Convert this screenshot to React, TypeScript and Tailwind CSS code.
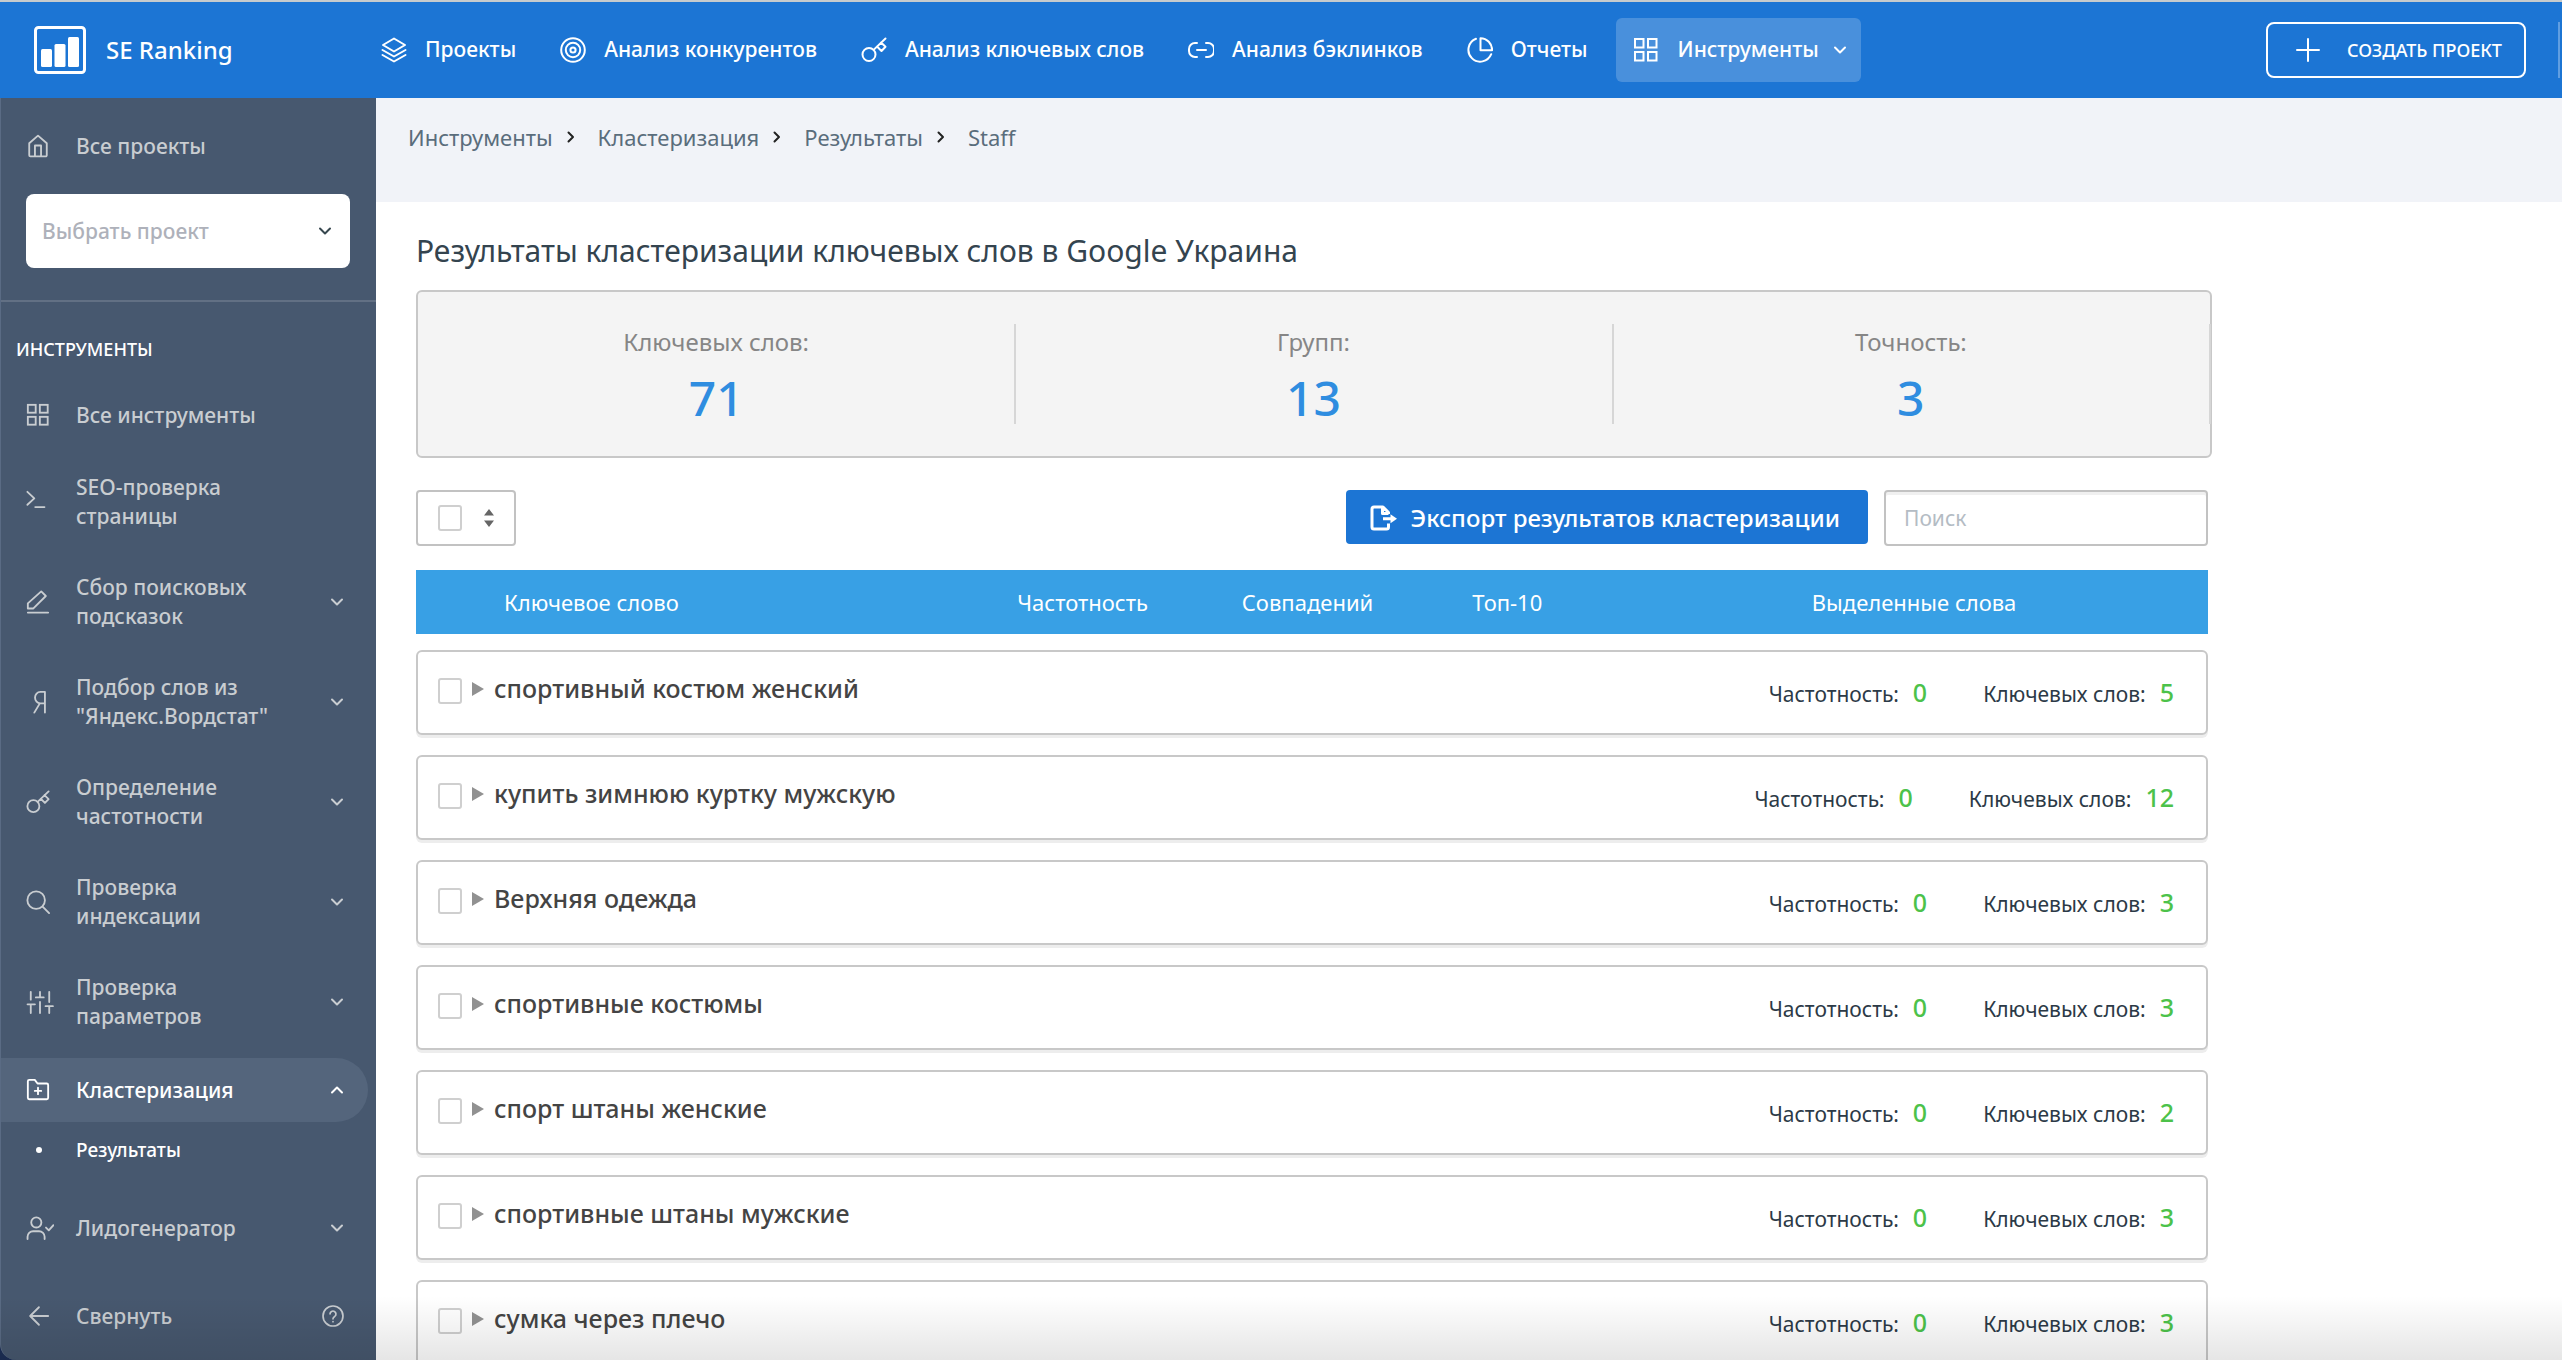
import { useState, type ReactNode } from "react";

type IconProps = { className?: string; children: ReactNode; box?: string };

function Icon({ className = "size-[26px]", box = "0 0 26 26", children }: IconProps) {
  return (
    <svg
      aria-hidden
      viewBox={box}
      fill="none"
      stroke="currentColor"
      strokeWidth="2"
      strokeLinecap="round"
      strokeLinejoin="round"
      className={"shrink-0 " + className}
    >
      {children}
    </svg>
  );
}

const layers = (
  <>
    <path d="M13 1.5 24 8 13 14.5 2 8Z" />
    <path d="m1.5 13 11.5 6.5L24.5 13" />
    <path d="m1.5 18 11.5 6.5L24.5 18" />
  </>
);
const target = (
  <>
    <circle cx="13" cy="13" r="11.8" />
    <circle cx="13" cy="13" r="7.2" />
    <circle cx="13" cy="13" r="2.6" />
  </>
);
const keyShape = (
  <>
    <circle cx="8" cy="17.5" r="6.5" />
    <path d="M12.6 12.9 24.5 1.5M16 9.5l4.5 4.5 4-4.2-4.5-4.3" />
  </>
);
const link = (
  <>
    <path d="M9 6H7a6 6 0 0 0-6 6v2a6 6 0 0 0 6 6h2" />
    <path d="M18 6h2a6 6 0 0 1 6 6v2a6 6 0 0 1-6 6h-2" />
    <path d="M9 13h9" />
  </>
);
const pie = (
  <>
    <path d="M9 1.8a11.8 11.8 0 1 0 15.2 15.4" />
    <path d="M13.5 1.2v12h11.6a11.8 11.8 0 0 0-11.6-12Z" />
  </>
);
const grid = (
  <g strokeLinejoin="miter">
    <rect x="2" y="2" width="8.5" height="8.5" />
    <rect x="15" y="2" width="8.5" height="8.5" />
    <rect x="2" y="15" width="8.5" height="8.5" />
    <rect x="15" y="15" width="8.5" height="8.5" />
  </g>
);
const home = (
  <>
    <path d="M3.5 10 13 1.8 22.5 10v13a1.2 1.2 0 0 1-1.2 1.2H4.7a1.2 1.2 0 0 1-1.2-1.2Z" />
    <path d="M9.7 24V12.5h6.6V24" />
  </>
);
const terminal = <path d="m1.5 2 7.5 7-7.5 7M10 18.5h10" />;
const pencil = (
  <>
    <path d="M16.5 1.5 21.5 6.5 8 20H2v-5.5Z" />
    <path d="M2 24.5h22" />
  </>
);
const yandex = <path d="M20.5 24.5V2h-5a5.5 6 0 0 0 0 12.5h5M15 14.5 9 24.5" />;
const search = (
  <>
    <circle cx="11" cy="11" r="9.5" />
    <path d="m18 18 7 7" />
  </>
);
const sliders = (
  <path d="M5 2v8.5M1.5 15.5h8M5 15.5V25M15 2v5M10.5 8H19M15 13v12M25 2v11M21 17.5h8M25 17.5V25" />
);
const folder = (
  <>
    <path d="M2 21.5v-18A1.5 1.5 0 0 1 3.5 2h6l3 4h10A1.5 1.5 0 0 1 24 7.5v14a1.5 1.5 0 0 1-1.5 1.5h-19A1.5 1.5 0 0 1 2 21.5Z" />
    <path d="M13 10.5v7M9.5 14h7" />
  </>
);
const userCheck = (
  <>
    <circle cx="11" cy="7" r="5.5" />
    <path d="M1.5 25v-2.5a6 6 0 0 1 6-6H14a6 6 0 0 1 6 6V25M21.5 12.5l3 3 5-5.5" />
  </>
);
const arrowLeft = <path d="M24 13H5M14 3.5 4.5 13l9.5 9.5" />;
const help = (
  <>
    <circle cx="13" cy="13" r="11.8" />
    <path d="M9.5 10.5a3.5 3.5 0 1 1 5.5 3c-1.4.9-2 1.4-2 2.8M13 19.6v.2" />
  </>
);

function Chevron({ className = "size-3.5", up = false }: { className?: string; up?: boolean }) {
  return (
    <Icon box="0 0 14 14" className={className}>
      <path d={up ? "m2 9.5 5-5 5 5" : "m2 4.5 5 5 5-5"} />
    </Icon>
  );
}

const NAV = [
  { label: "Проекты", icon: layers },
  { label: "Анализ конкурентов", icon: target },
  { label: "Анализ ключевых слов", icon: keyShape },
  { label: "Анализ бэклинков", icon: link },
  { label: "Отчеты", icon: pie },
];

const TOOLS = [
  { label: "SEO-проверка страницы", icon: terminal, nested: false },
  { label: "Сбор поисковых подсказок", icon: pencil, nested: true },
  { label: 'Подбор слов из "Яндекс.Вордстат"', icon: yandex, nested: true },
  { label: "Определение частотности", icon: keyShape, nested: true },
  { label: "Проверка индексации", icon: search, nested: true },
  { label: "Проверка параметров", icon: sliders, nested: true },
];

const CRUMBS = ["Инструменты", "Кластеризация", "Результаты", "Staff"];

const STATS = [
  { label: "Ключевых слов:", value: 71 },
  { label: "Групп:", value: 13 },
  { label: "Точность:", value: 3 },
];

const CLUSTERS = [
  { name: "спортивный костюм женский", frequency: 0, count: 5 },
  { name: "купить зимнюю куртку мужскую", frequency: 0, count: 12 },
  { name: "Верхняя одежда", frequency: 0, count: 3 },
  { name: "спортивные костюмы", frequency: 0, count: 3 },
  { name: "спорт штаны женские", frequency: 0, count: 2 },
  { name: "спортивные штаны мужские", frequency: 0, count: 3 },
  { name: "сумка через плечо", frequency: 0, count: 3 },
];

const CHECKBOX =
  "block h-[26px] w-6 shrink-0 appearance-none rounded-[3px] border-2 border-[#cfcfcf] bg-white/60 checked:bg-[#38a0e5]";

function Header() {
  return (
    <header className="flex h-[98px] shrink-0 items-center border-t-2 border-[#c6cbcd] bg-[#1c75d4] text-[21px] font-medium text-white">
      <a href="#" className="flex w-[381px] shrink-0 items-center gap-5 pl-[34px] text-2xl">
        <svg aria-hidden viewBox="0 0 52 48" className="h-12 w-[52px]">
          <rect x="1.5" y="1.5" width="49" height="45" rx="3" fill="none" stroke="#fff" strokeWidth="3" />
          <rect x="7" y="23" width="11" height="18" rx="1.5" fill="#fff" />
          <rect x="20.5" y="18" width="11" height="23" rx="1.5" fill="#fff" />
          <rect x="34" y="11" width="11" height="30" rx="1.5" fill="#fff" />
        </svg>
        SE Ranking
      </a>
      <nav className="flex grow items-center gap-11 whitespace-nowrap">
        {NAV.map((item) => (
          <a key={item.label} href="#" className="flex items-center gap-[18px]">
            <Icon>{item.icon}</Icon>
            {item.label}
          </a>
        ))}
        <button
          type="button"
          className="-ml-4 flex h-16 items-center rounded-md bg-white/20 pr-3.5 pl-[17px]"
        >
          <Icon>{grid}</Icon>
          <span className="mr-3.5 ml-[19px]">Инструменты</span>
          <Chevron />
        </button>
      </nav>
      <button
        type="button"
        className="flex h-14 shrink-0 items-center gap-[27px] rounded-lg border-2 border-white pr-[22px] pl-7 text-[18px]"
      >
        <Icon className="size-6" box="0 0 24 24">
          <path d="M12 1v22M1 12h22" />
        </Icon>
        СОЗДАТЬ ПРОЕКТ
      </button>
      <div className="mr-0.5 ml-8 h-14 w-0.5 bg-white/30" />
    </header>
  );
}

function Sidebar() {
  return (
    <aside className="flex w-[376px] shrink-0 flex-col overflow-hidden rounded-bl-2xl border-l border-[#5a6b84] bg-[#47586f] text-[21px] leading-[29px] font-medium text-[#c9cdd1]">
      <a href="#" className="flex h-24 shrink-0 items-center pl-[25px]">
        <Icon className="size-6">{home}</Icon>
        <span className="ml-[26px]">Все проекты</span>
      </a>
      <div className="relative mr-[26px] ml-[25px]">
        <select
          aria-label="Проект"
          defaultValue=""
          className="h-[74px] w-full appearance-none rounded-lg bg-white px-4 text-[#aeb1ba]"
        >
          <option value="">Выбрать проект</option>
        </select>
        <div className="pointer-events-none absolute inset-y-0 right-[18px] flex items-center text-[#37474f]">
          <Chevron />
        </div>
      </div>
      <div className="mt-8 h-0.5 shrink-0 bg-white/15" />
      <h2 className="mt-[33px] shrink-0 pl-[15px] text-[18px] text-white">ИНСТРУМЕНТЫ</h2>
      <nav className="mt-3.5">
        <a href="#" className="flex h-[74px] items-center pl-[25px]">
          <Icon className="size-6">{grid}</Icon>
          <span className="ml-[26px]">Все инструменты</span>
        </a>
        {TOOLS.map((tool) => (
          <a key={tool.label} href="#" className="flex h-[100px] items-center pr-8 pl-[25px]">
            <Icon
              className={tool.icon === sliders ? "h-6 w-7" : "size-6"}
              box={tool.icon === sliders ? "0 0 30 26" : "0 0 26 26"}
            >
              {tool.icon}
            </Icon>
            <span className={tool.icon === sliders ? "ml-[22px] w-[200px]" : "ml-[26px] w-[200px]"}>
              {tool.label}
            </span>
            {tool.nested && (
              <span className="ml-auto">
                <Chevron />
              </span>
            )}
          </a>
        ))}
        <a
          href="#"
          className="mt-1.5 mr-2 flex h-16 items-center rounded-r-full bg-[#54657c] pr-6 pl-[25px] text-white"
        >
          <Icon className="size-6">{folder}</Icon>
          <span className="mr-auto ml-[26px]">Кластеризация</span>
          <Chevron up />
        </a>
        <a href="#" className="flex h-14 items-center text-[19px] text-white">
          <span className="mr-[34px] ml-[35px] size-1.5 rounded-sm bg-white" />
          Результаты
        </a>
        <a href="#" className="mt-3.5 flex h-[72px] items-center pr-8 pl-[25px]">
          <Icon className="h-6 w-7" box="0 0 30 26">
            {userCheck}
          </Icon>
          <span className="mr-auto ml-[22px]">Лидогенератор</span>
          <Chevron />
        </a>
      </nav>
      <div className="mt-[34px] flex h-9 items-center pr-8 pl-[25px]">
        <button type="button" className="flex items-center">
          <Icon className="size-6">{arrowLeft}</Icon>
          <span className="ml-[26px]">Свернуть</span>
        </button>
        <button type="button" aria-label="Помощь" className="ml-auto">
          <Icon className="size-[22px]">{help}</Icon>
        </button>
      </div>
    </aside>
  );
}

function Breadcrumbs() {
  return (
    <nav className="h-[104px] shrink-0 bg-[#f1f3f8] px-8 pt-[23px] text-[22px] leading-8 text-[#5a6d7c]">
      <ol className="flex">
        {CRUMBS.map((crumb, i) => (
          <li key={crumb} className="flex items-center">
            {i > 0 && (
              <Icon box="0 0 14 14" className="mr-5 ml-[11px] size-3.5 text-[#222]">
                <path d="m4.5 2.500 4.500 4.500-4.500 4.500" />
              </Icon>
            )}
            <a href="#">{crumb}</a>
          </li>
        ))}
      </ol>
    </nav>
  );
}

function Toolbar({ allChecked, onToggleAll }: { allChecked: boolean; onToggleAll: () => void }) {
  return (
    <div className="mt-8 flex h-14 items-start">
      <div className="flex h-14 w-[100px] items-center rounded border-2 border-[#c2c2c2] px-5">
        <input
          type="checkbox"
          aria-label="Выбрать все"
          checked={allChecked}
          onChange={onToggleAll}
          className={CHECKBOX}
        />
        <button type="button" aria-label="Действия" className="ml-auto text-[#666]">
          <svg aria-hidden viewBox="0 0 10 20" className="h-5 w-2.5" fill="currentColor">
            <path d="M5 1l5 6.5H0zM5 19l5-6.5H0z" />
          </svg>
        </button>
      </div>
      <button
        type="button"
        className="ml-auto flex h-[54px] items-center rounded bg-[#1c75d4] pt-0.5 pr-7 pl-6 text-2xl font-medium text-white"
      >
        <svg
          aria-hidden
          viewBox="0 0 27 26"
          className="mr-3.5 h-[26px] w-[27px]"
          fill="none"
          stroke="currentColor"
          strokeWidth="3"
          strokeLinejoin="round"
        >
          <path d="M18.5 9V7.500L13 2H4a2 2 0 0 0-2 2v18a2 2 0 0 0 2 2h12.500a2 2 0 0 0 2-2v-3.500M12.500 2v6.500h6M13 13.800h8" />
          <path d="M20.5 9.300v9l6.500-4.500z" fill="currentColor" stroke="none" />
        </svg>
        Экспорт результатов кластеризации
      </button>
      <input
        type="search"
        aria-label="Поиск"
        placeholder="Поиск"
        className="ml-4 h-14 w-[324px] rounded border-2 border-[#c2c2c2] px-[18px] text-[21px] shadow-[inset_0_3px_0_#f0f0f0] placeholder:text-[#b4bcc4]"
      />
    </div>
  );
}

export default function App() {
  const [selected, setSelected] = useState<string[]>([]);
  const allChecked = selected.length === CLUSTERS.length;

  function toggle(name: string) {
    setSelected((s) => (s.includes(name) ? s.filter((n) => n !== name) : [...s, name]));
  }

  return (
    <div className="relative flex h-screen flex-col overflow-hidden bg-[#1d2f56] font-['Noto_Sans',sans-serif]">
      <Header />
      <div className="flex min-h-0 grow">
        <Sidebar />
        <main className="min-w-0 grow overflow-hidden bg-white">
          <Breadcrumbs />
          <div className="w-full max-w-[1872px] px-10">
            <h1 className="pt-7 text-[30px] leading-[42px] text-[#34444f]">
              Результаты кластеризации ключевых слов в Google Украина
            </h1>
            <dl className="mt-[18px] -mr-1 flex h-[168px] items-center rounded-md border-2 border-[#c8c8c8] bg-[#f4f4f4] text-center">
              {STATS.map((stat) => (
                <div key={stat.label} className="-mr-px h-[100px] grow basis-0 border-r-2 border-[#d6d6d6]">
                  <dt className="text-2xl leading-9 text-[#868686]">{stat.label}</dt>
                  <dd className="text-[48px] leading-[76px] font-medium text-[#2f8de0]">{stat.value}</dd>
                </div>
              ))}
            </dl>
            <Toolbar
              allChecked={allChecked}
              onToggleAll={() => setSelected(allChecked ? [] : CLUSTERS.map((c) => c.name))}
            />
            <table className="mt-6 w-full table-fixed">
              <thead>
                <tr className="h-16 bg-[#38a0e5] text-[22px] text-white">
                  <th className="w-[29.5%] pl-[88px] text-left font-normal">Ключевое слово</th>
                  <th className="w-[15.4%] font-normal">Частотность</th>
                  <th className="w-[9.7%] font-normal">Совпадений</th>
                  <th className="w-[12.6%] font-normal">Топ-10</th>
                  <th className="w-[32.8%] font-normal">Выделенные слова</th>
                </tr>
              </thead>
              <tbody>
                {CLUSTERS.map((cluster) => (
                  <tr key={cluster.name}>
                    <td colSpan={5} className="pt-4 pb-1">
                      <div className="flex h-[85px] items-center rounded-md border-2 border-[#c8c8c8] bg-white pr-8 pb-1 pl-5 shadow-[0_3px_0_#ededed]">
                        <input
                          type="checkbox"
                          aria-label={cluster.name}
                          checked={selected.includes(cluster.name)}
                          onChange={() => toggle(cluster.name)}
                          className={CHECKBOX}
                        />
                        <button
                          type="button"
                          className="flex items-center pb-1 pl-2.5 text-[25px] font-medium text-[#444]"
                        >
                          <svg aria-hidden viewBox="0 0 12 14" className="mr-2.5 h-3.5 w-3 fill-[#919191]">
                            <path d="M0 0v14l12-7z" />
                          </svg>
                          {cluster.name}
                        </button>
                        <p className="ml-auto flex items-baseline pt-1 text-[21px] text-[#2c3a47]">
                          Частотность:
                          <b className="ml-3.5 text-[25px] font-medium text-[#4cc24a]">{cluster.frequency}</b>
                          <span className="ml-14">Ключевых слов:</span>
                          <b className="ml-3.5 text-[25px] font-medium text-[#4cc24a]">{cluster.count}</b>
                        </p>
                      </div>
                    </td>
                  </tr>
                ))}
              </tbody>
            </table>
          </div>
        </main>
      </div>
      <div className="pointer-events-none absolute inset-x-0 bottom-0 h-16 bg-linear-to-t from-black/10 to-transparent" />
    </div>
  );
}
